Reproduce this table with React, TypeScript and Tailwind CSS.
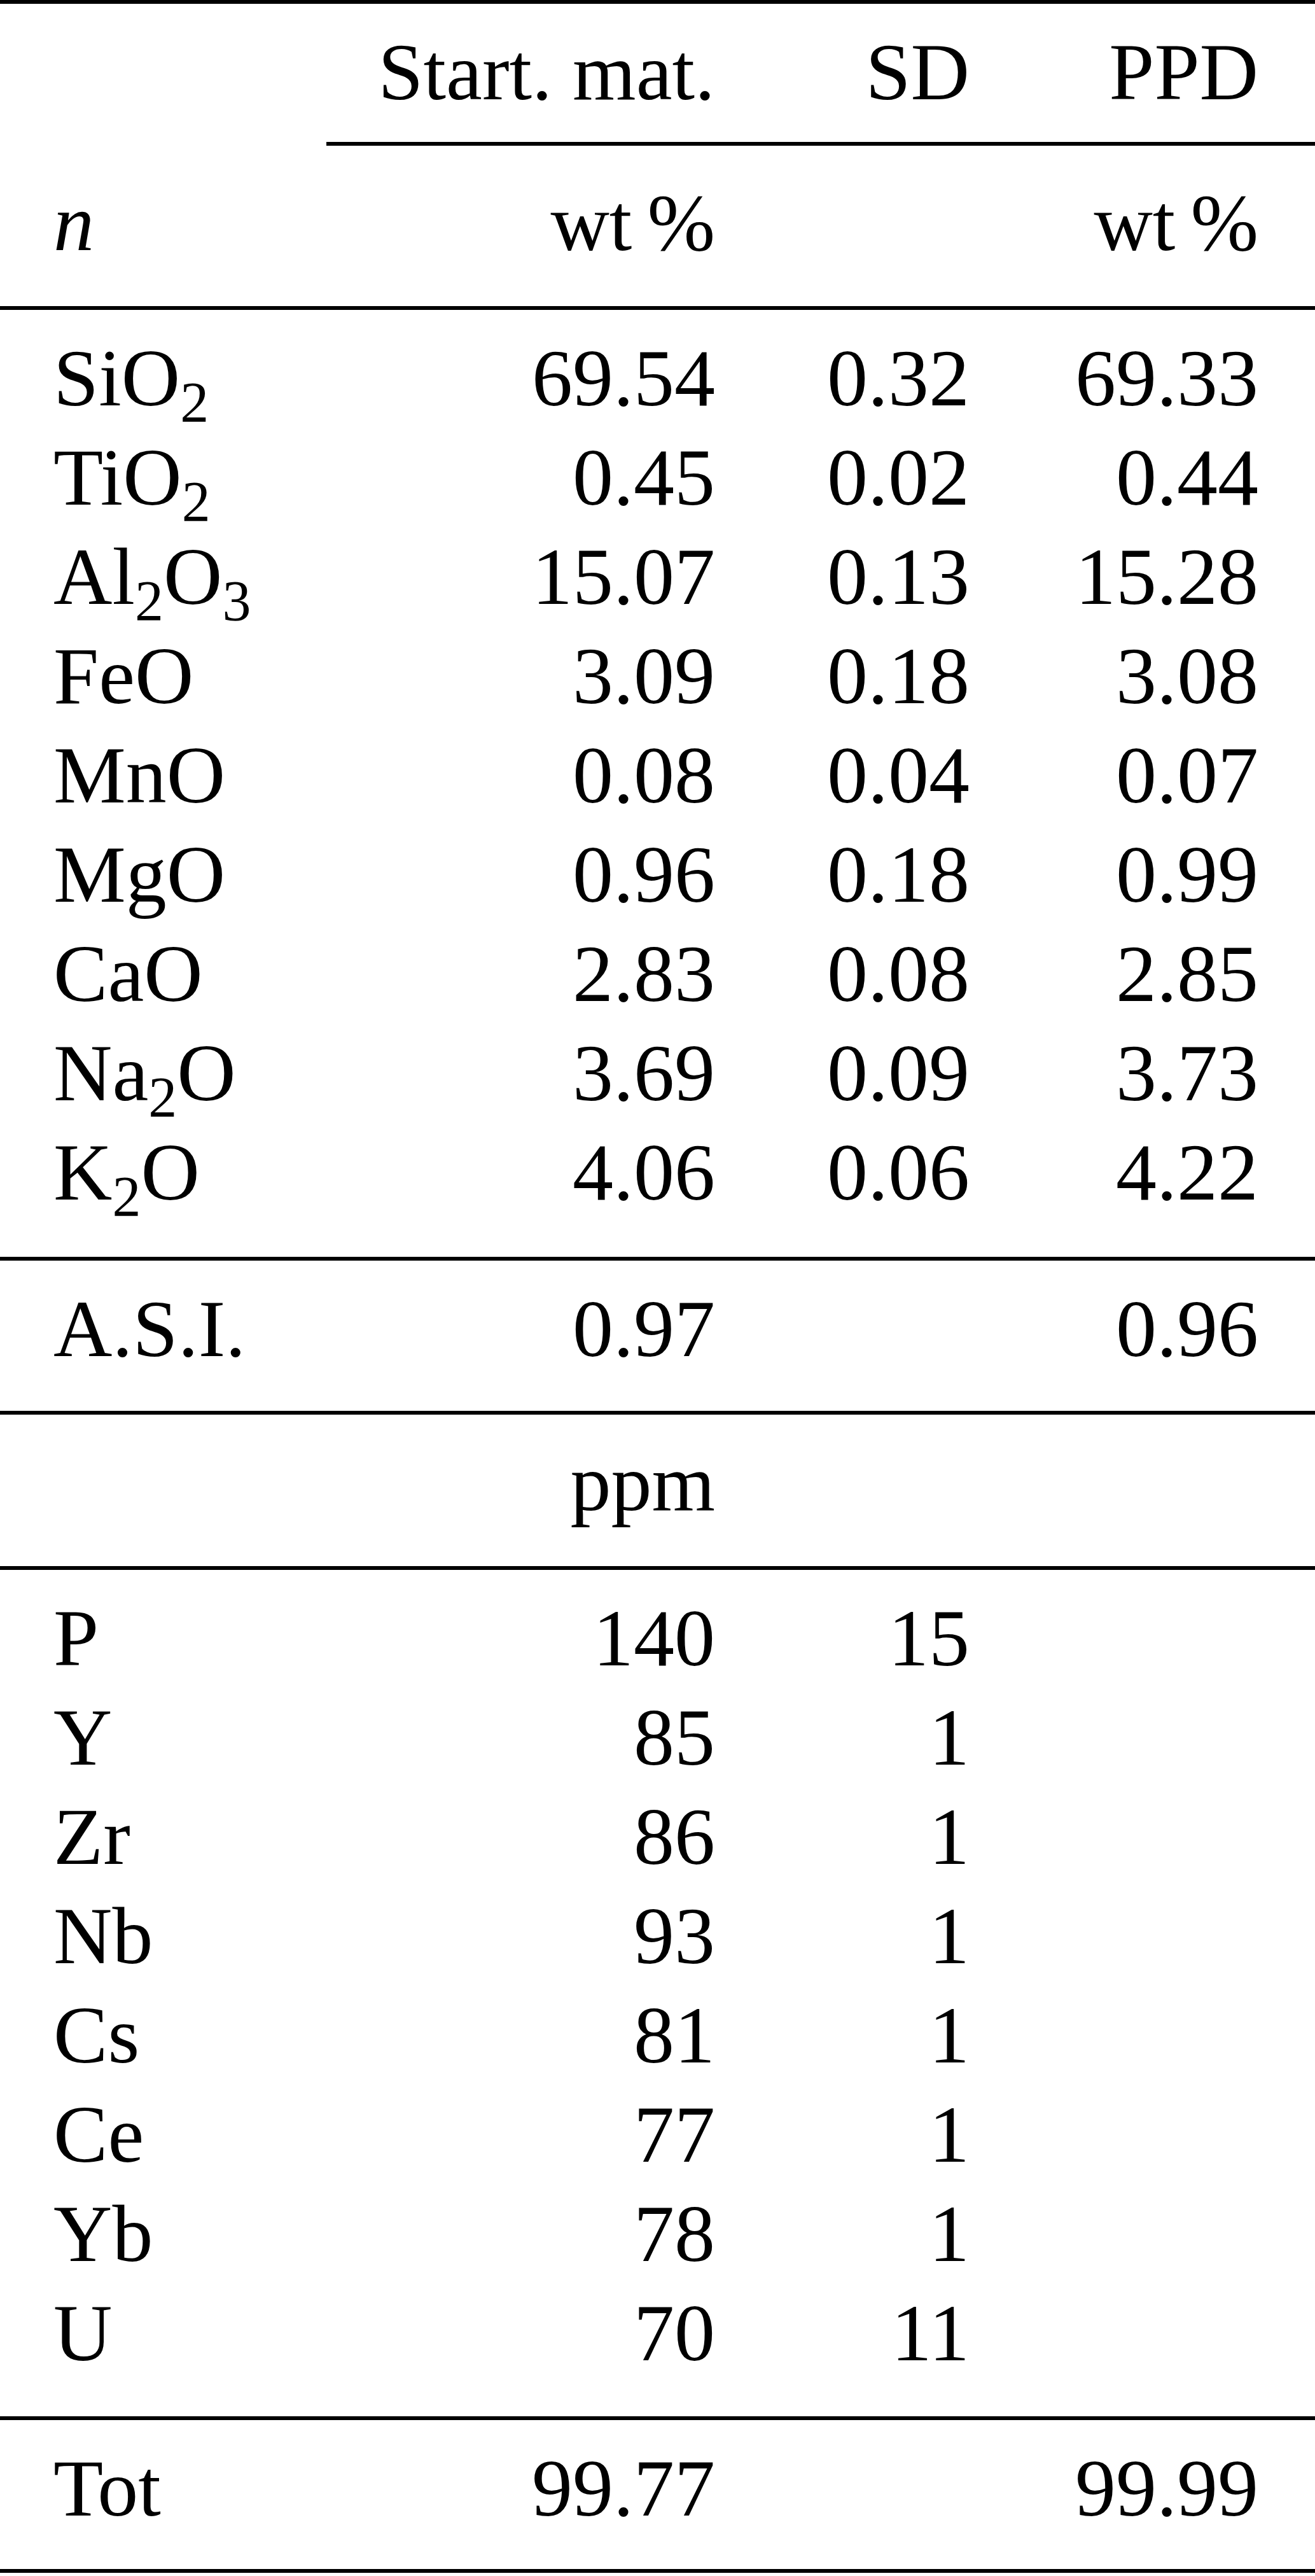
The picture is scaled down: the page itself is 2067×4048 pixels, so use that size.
import type { ReactNode } from "react";

type Row = {
  label: ReactNode;
  start: ReactNode;
  sd?: ReactNode;
  ppd?: ReactNode;
};

const Sub = ({ children }: { children: ReactNode }) => (
  <sub className="text-[90px] bottom-[-26px]">{children}</sub>
);

const oxides: Row[] = [
  { label: <>SiO<Sub>2</Sub></>, start: "69.54", sd: "0.32", ppd: "69.33" },
  { label: <>TiO<Sub>2</Sub></>, start: "0.45", sd: "0.02", ppd: "0.44" },
  { label: <>Al<Sub>2</Sub>O<Sub>3</Sub></>, start: "15.07", sd: "0.13", ppd: "15.28" },
  { label: "FeO", start: "3.09", sd: "0.18", ppd: "3.08" },
  { label: "MnO", start: "0.08", sd: "0.04", ppd: "0.07" },
  { label: "MgO", start: "0.96", sd: "0.18", ppd: "0.99" },
  { label: "CaO", start: "2.83", sd: "0.08", ppd: "2.85" },
  { label: <>Na<Sub>2</Sub>O</>, start: "3.69", sd: "0.09", ppd: "3.73" },
  { label: <>K<Sub>2</Sub>O</>, start: "4.06", sd: "0.06", ppd: "4.22" },
];

const traces: Row[] = [
  { label: "P", start: "140", sd: "15" },
  { label: "Y", start: "85", sd: "1" },
  { label: "Zr", start: "86", sd: "1" },
  { label: "Nb", start: "93", sd: "1" },
  { label: "Cs", start: "81", sd: "1" },
  { label: "Ce", start: "77", sd: "1" },
  { label: "Yb", start: "78", sd: "1" },
  { label: "U", start: "70", sd: "11" },
];

const TableRow = ({ label, start, sd, ppd }: Row) => (
  <div className="flex h-[156px] leading-[156px] whitespace-nowrap">
    <div className="w-[513px] pl-[84px]">{label}</div>
    <div className="w-[611px] text-right">{start}</div>
    <div className="w-[400px] text-right">{sd}</div>
    <div className="w-[454px] text-right">{ppd}</div>
  </div>
);

const Rule = ({ inset = false }: { inset?: boolean }) => (
  <div className={inset ? "ml-[513px] h-[6px] bg-black" : "h-[6px] bg-black"} />
);

const WtPct = () => (
  <>
    wt<span className="ml-[24px]">%</span>
  </>
);

export default function App() {
  return (
    <div className="w-[2067px] h-[4048px] bg-white text-black font-['Liberation_Serif','Times_New_Roman',serif] text-[128px]">
      <Rule />

      {/* column heads */}
      <div className="pt-[29px] pb-[32px]">
        <TableRow label="" start="Start. mat." sd="SD" ppd="PPD" />
      </div>
      <Rule inset />

      <div className="pt-[43px] pb-[53px]">
        <TableRow label={<i>n</i>} start={<WtPct />} ppd={<WtPct />} />
      </div>
      <Rule />

      {/* major elements */}
      <div className="pt-[29px] pb-[55px]">
        {oxides.map((r, i) => (
          <TableRow key={i} {...r} />
        ))}
      </div>
      <Rule />

      <div className="pt-[29px] pb-[51px]">
        <TableRow label="A.S.I." start="0.97" ppd="0.96" />
      </div>
      <Rule />

      <div className="pt-[29px] pb-[53px]">
        <TableRow label="" start="ppm" />
      </div>
      <Rule />

      {/* trace elements */}
      <div className="pt-[29px] pb-[53px]">
        {traces.map((r, i) => (
          <TableRow key={i} {...r} />
        ))}
      </div>
      <Rule />

      <div className="pt-[29px] pb-[49px]">
        <TableRow label="Tot" start="99.77" ppd="99.99" />
      </div>
      <Rule />
    </div>
  );
}
